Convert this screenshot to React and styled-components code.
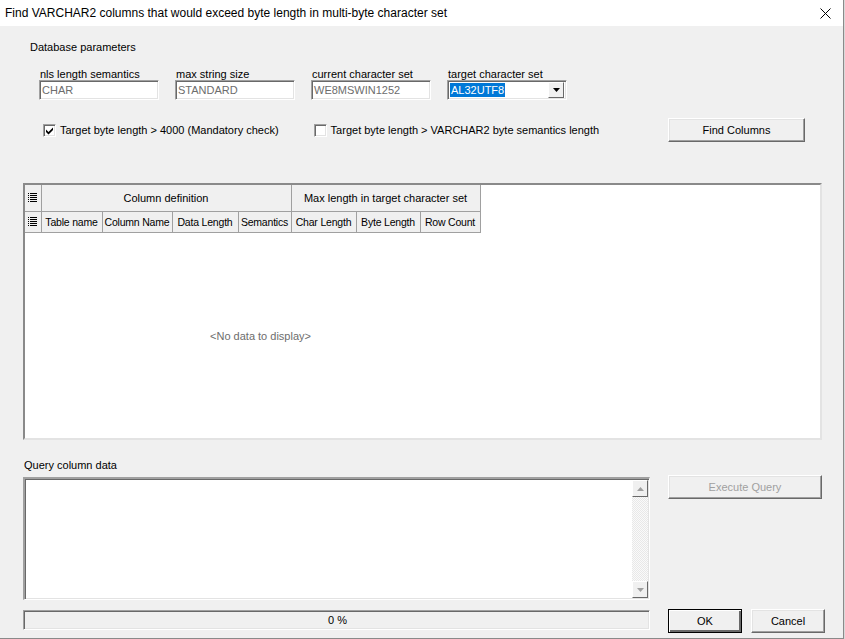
import React from "react";
import styled, { createGlobalStyle } from "styled-components";

const GlobalStyle = createGlobalStyle`
  html, body {
    margin: 0;
    padding: 0;
    background: #d9d9d9;
  }
  body {
    font-family: "Liberation Sans", Arial, sans-serif;
    font-size: 11px;
    color: #000;
  }
`;

const columns = [
  { name: "Table name", width: 61 },
  { name: "Column Name", width: 70 },
  { name: "Data Length", width: 66 },
  { name: "Semantics", width: 53 },
  { name: "Char Length", width: 65 },
  { name: "Byte Length", width: 64 },
  { name: "Row Count", width: 60 },
];

const params = [
  { label: "nls length semantics", value: "CHAR" },
  { label: "max string size", value: "STANDARD" },
  { label: "current character set", value: "WE8MSWIN1252" },
];

function ListIcon() {
  return (
    <svg width="9" height="9" viewBox="0 0 9 9">
      {[0.5, 2.5, 4.5, 6.5, 8.5].map((y) => (
        <g key={y} stroke="#000" strokeWidth="1">
          <line x1="0" y1={y} x2="1" y2={y} />
          <line x1="2" y1={y} x2="9" y2={y} />
        </g>
      ))}
    </svg>
  );
}

function Arrow({ down, color }) {
  return (
    <svg width="7" height="4" viewBox="0 0 7 4">
      <path d={down ? "M0 0 L7 0 L3.5 4 Z" : "M0 4 L7 4 L3.5 0 Z"} fill={color} />
    </svg>
  );
}

export default function App() {
  return (
    <>
      <GlobalStyle />
      <Window>
        <TitleBar>
          <TitleText>Find VARCHAR2 columns that would exceed byte length in multi-byte character set</TitleText>
          <CloseBtn>
            <svg width="11" height="11" viewBox="0 0 11 11">
              <path d="M0.5 0.5 L10.5 10.5 M10.5 0.5 L0.5 10.5" stroke="#000" strokeWidth="1" />
            </svg>
          </CloseBtn>
        </TitleBar>

        <Body>
          <GroupTitle>Database parameters</GroupTitle>
          <FieldsRow>
            {params.map((p) => (
              <Field key={p.label}>
                <FieldLabel>{p.label}</FieldLabel>
                <TextBox>{p.value}</TextBox>
              </Field>
            ))}
            <Field>
              <FieldLabel>target character set</FieldLabel>
              <Combo>
                <Selected>AL32UTF8</Selected>
                <DropBtn>
                  <Arrow down color="#000" />
                </DropBtn>
              </Combo>
            </Field>
          </FieldsRow>

          <CheckRow>
            <CheckItem $left={20}>
              <CheckBox>
                <svg width="9" height="9" viewBox="0 0 9 9">
                  <path d="M1 3.5 L3.5 6 L8 1.5 L8 4 L3.5 8.5 L1 6 Z" fill="#000" />
                </svg>
              </CheckBox>
              Target byte length &gt; 4000 (Mandatory check)
            </CheckItem>
            <CheckItem $left={35}>
              <CheckBox />
              Target byte length &gt; VARCHAR2 byte semantics length
            </CheckItem>
            <Button $width={137} style={{ marginLeft: "auto" }}>Find Columns</Button>
          </CheckRow>

          <GridPanel>
            <Table>
              <colgroup>
                <col style={{ width: 16 }} />
                {columns.map((c) => (
                  <col key={c.name} style={{ width: c.width }} />
                ))}
              </colgroup>
              <thead>
                <tr>
                  <HeadCell $h={26}><ListIcon /></HeadCell>
                  <HeadCell $h={26} colSpan={4}>Column definition</HeadCell>
                  <HeadCell $h={26} colSpan={3}>Max length in target character set</HeadCell>
                </tr>
                <tr>
                  <HeadCell $h={21}><ListIcon /></HeadCell>
                  {columns.map((c) => (
                    <HeadCell key={c.name} $h={21} $small>{c.name}</HeadCell>
                  ))}
                </tr>
              </thead>
            </Table>
            <EmptyText>&lt;No data to display&gt;</EmptyText>
          </GridPanel>

          <SectionLabel>Query column data</SectionLabel>
          <BottomGrid>
            <Memo>
              <MemoText />
              <ScrollBar>
                <ScrollBtn><Arrow color="#a0a0a0" /></ScrollBtn>
                <ScrollTrack />
                <ScrollBtn><Arrow down color="#a0a0a0" /></ScrollBtn>
              </ScrollBar>
            </Memo>
            <RightCol>
              <Button $width={154} $disabled>Execute Query</Button>
            </RightCol>
            <Progress>0 %</Progress>
            <ButtonRow>
              <Button $width={74} $default>OK</Button>
              <Button $width={74}>Cancel</Button>
            </ButtonRow>
          </BottomGrid>
        </Body>
      </Window>
    </>
  );
}

const Window = styled.div`
  width: 843px;
  height: 638px;
  background: #f0f0f0;
  border-right: 1px solid #8a8a8a;
  border-bottom: 1px solid #8a8a8a;
  display: flex;
  flex-direction: column;
  overflow: hidden;
`;

const TitleBar = styled.div`
  height: 26px;
  background: #fff;
  display: flex;
  align-items: center;
  padding-left: 5px;
  padding-right: 12px;
`;

const TitleText = styled.div`
  flex: 1;
  font-size: 12px;
  color: #000;
`;

const CloseBtn = styled.div`
  display: flex;
  align-items: center;
  justify-content: center;
  width: 12px;
  height: 12px;
`;

const Body = styled.div`
  flex: 1;
  padding: 0 21px 0 23px;
  display: flex;
  flex-direction: column;
`;

const GroupTitle = styled.div`
  margin-top: 15px;
  margin-left: 7px;
  line-height: 13px;
`;

const FieldsRow = styled.div`
  display: flex;
  gap: 16px;
  margin-left: 16px;
  margin-top: 14px;
`;

const Field = styled.div`
  display: flex;
  flex-direction: column;
  width: 120px;
`;

const FieldLabel = styled.div`
  line-height: 12px;
  padding-left: 1px;
`;

const sunken = `
  border: 1px solid;
  border-color: #a0a0a0 #fff #fff #a0a0a0;
  box-shadow: inset 1px 1px 0 #696969, inset -1px -1px 0 #e3e3e3;
`;

const TextBox = styled.div`
  ${sunken}
  box-sizing: border-box;
  height: 20px;
  background: #fff;
  color: #6d6d6d;
  padding: 0 2px;
  display: flex;
  align-items: center;
`;

const Combo = styled.div`
  ${sunken}
  box-sizing: border-box;
  height: 20px;
  background: #fff;
  display: flex;
  align-items: center;
  padding: 2px;
`;

const Selected = styled.div`
  background: #0078d7;
  color: #fff;
  height: 14px;
  line-height: 14px;
  padding: 0 1px;
  margin-right: auto;
`;

const DropBtn = styled.div`
  box-sizing: border-box;
  width: 16px;
  height: 16px;
  background: #f0f0f0;
  border: 1px solid;
  border-color: #fff #696969 #696969 #fff;
  display: flex;
  align-items: center;
  justify-content: center;
`;

const CheckRow = styled.div`
  display: flex;
  align-items: center;
  margin-top: 18px;
  padding-right: 17px;
  height: 24px;
`;

const CheckItem = styled.div`
  display: flex;
  align-items: center;
  gap: 3px;
  margin-left: ${(p) => p.$left}px;
  line-height: 13px;
`;

const CheckBox = styled.div`
  ${sunken}
  box-sizing: border-box;
  width: 13px;
  height: 13px;
  background: #fff;
  display: flex;
  align-items: center;
  justify-content: center;
  margin-right: 1px;
`;

const Button = styled.div`
  box-sizing: border-box;
  width: ${(p) => p.$width}px;
  height: 24px;
  display: flex;
  align-items: center;
  justify-content: center;
  background: #f0f0f0;
  color: ${(p) => (p.$disabled ? "#a0a0a0" : "#000")};
  border: 1px solid;
  border-color: ${(p) => (p.$default ? "#000" : "#fff #696969 #696969 #fff")};
  box-shadow: ${(p) =>
    p.$default
      ? "inset 1px 1px 0 #fff, inset -2px -2px 0 #696969"
      : "inset -1px -1px 0 #a0a0a0, inset 1px 1px 0 #e3e3e3"};
`;

const GridPanel = styled.div`
  box-sizing: border-box;
  margin-top: 41px;
  height: 257px;
  width: 799px;
  background: #fff;
  border: 2px solid;
  border-color: #8a8a8a #e3e3e3 #e3e3e3 #8a8a8a;
  display: flex;
  flex-direction: column;
  align-items: flex-start;
`;

const Table = styled.table`
  border-collapse: collapse;
  table-layout: fixed;
  width: 455px;
`;

const HeadCell = styled.th`
  box-sizing: border-box;
  height: ${(p) => p.$h}px;
  background: #f0f0f0;
  border: 1px solid #a0a0a0;
  border-top: none;
  font-weight: normal;
  font-size: ${(p) => (p.$small ? "10.5px" : "11px")};
  letter-spacing: ${(p) => (p.$small ? "-0.2px" : "0")};
  padding: 0;
  white-space: nowrap;
  overflow: hidden;
  text-align: center;
  &:first-child {
    border-left: none;
    vertical-align: middle;
  }
`;

const EmptyText = styled.div`
  margin-left: 16px;
  width: 439px;
  margin-top: 97px;
  text-align: center;
  color: #6d6d6d;
`;

const SectionLabel = styled.div`
  margin-top: 19px;
  margin-left: 1px;
  line-height: 13px;
`;

const BottomGrid = styled.div`
  display: grid;
  grid-template-columns: 627px 157px;
  grid-template-rows: 123px 20px;
  column-gap: 18px;
  row-gap: 10px;
  margin-top: 5px;
`;

const Memo = styled.div`
  ${sunken}
  border-width: 2px 1px 1px 2px;
  box-sizing: border-box;
  background: #fff;
  display: flex;
  padding: 1px 1px 1px 0;
`;

const MemoText = styled.div`
  flex: 1;
`;

const ScrollBar = styled.div`
  width: 16px;
  display: flex;
  flex-direction: column;
`;

const ScrollBtn = styled.div`
  box-sizing: border-box;
  height: 17px;
  background: #f0f0f0;
  border: 1px solid;
  border-color: #fff #696969 #696969 #fff;
  display: flex;
  align-items: center;
  justify-content: center;
`;

const ScrollTrack = styled.div`
  flex: 1;
  background-color: #f4f4f4;
  background-image: repeating-conic-gradient(#e8e8e8 0 25%, #fafafa 0 50%);
  background-size: 2px 2px;
`;

const RightCol = styled.div`
  display: flex;
  flex-direction: column;
  margin-top: -2px;
`;

const Progress = styled.div`
  ${sunken}
  box-sizing: border-box;
  background: #f0f0f0;
  display: flex;
  align-items: center;
  justify-content: center;
  padding-left: 2px;
`;

const ButtonRow = styled.div`
  display: flex;
  gap: 9px;
  margin-top: -1px;
  height: 24px;
`;
